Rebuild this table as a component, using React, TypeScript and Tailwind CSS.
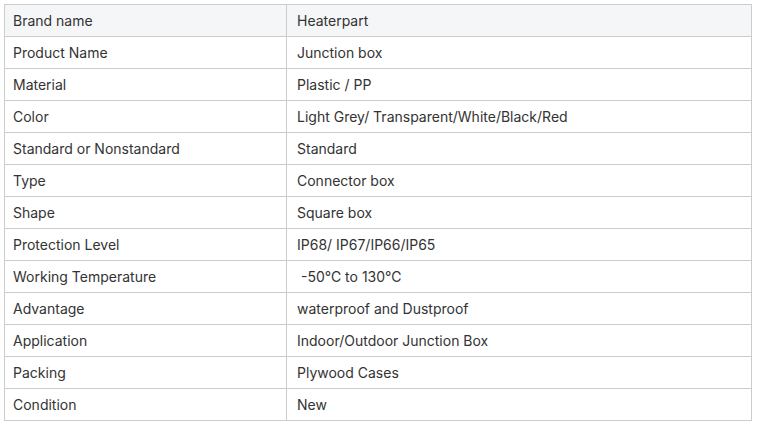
import React from "react";

const rows: [string, string][] = [
  ["Brand name", "Heaterpart"],
  ["Product Name", "Junction box"],
  ["Material", "Plastic / PP"],
  ["Color", "Light Grey/ Transparent/White/Black/Red"],
  ["Standard or Nonstandard", "Standard"],
  ["Type", "Connector box"],
  ["Shape", "Square box"],
  ["Protection Level", "IP68/ IP67/IP66/IP65"],
  ["Working Temperature", "\u00a0-50\u2103 to 130\u2103"],
  ["Advantage", "waterproof and Dustproof"],
  ["Application", "Indoor/Outdoor Junction Box"],
  ["Packing", "Plywood Cases"],
  ["Condition", "New"],
];

export default function App() {
  return (
    <div className="w-[757px] h-[424px] bg-white pt-[4px] pl-[4px]" style={{ fontFamily: "Inter, 'Noto Sans', sans-serif" }}>
      <table className="border-collapse w-[748px] text-[14px] text-[#333333]">
        <tbody>
          {rows.map(([a, b], i) => (
            <tr key={i} className={i === 0 ? "bg-[#f5f6f8]" : "bg-white"}>
              <td className="border border-[#cccccc] h-[32px] w-[282px] pl-[8px] py-0 leading-[20px]">{a}</td>
              <td className="border border-[#cccccc] h-[32px] pl-[10px] py-0 leading-[20px]">{b}</td>
            </tr>
          ))}
        </tbody>
      </table>
    </div>
  );
}
